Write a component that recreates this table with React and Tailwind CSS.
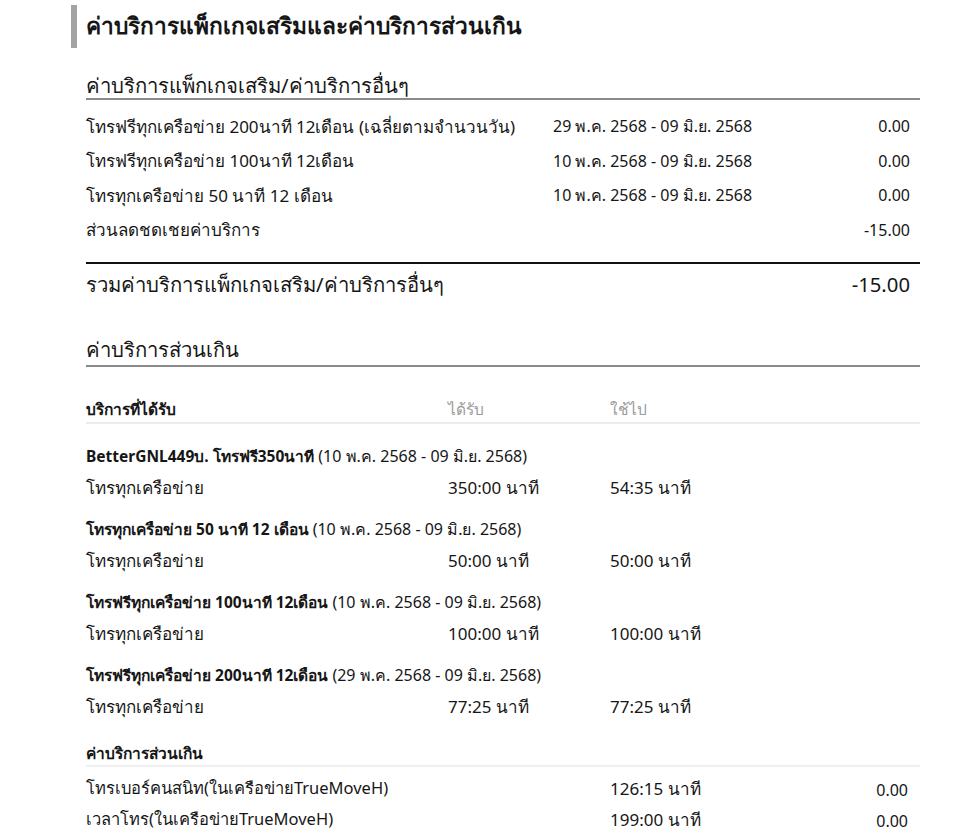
// App.jsx
// Add-on package and overage charges statement

const addons = [
    { name: 'โทรฟรีทุกเครือข่าย 200นาที 12เดือน (เฉลี่ยตามจำนวนวัน)', period: '29 พ.ค. 2568 - 09 มิ.ย. 2568', amount: '0.00' },
    { name: 'โทรฟรีทุกเครือข่าย 100นาที 12เดือน', period: '10 พ.ค. 2568 - 09 มิ.ย. 2568', amount: '0.00' },
    { name: 'โทรทุกเครือข่าย 50 นาที 12 เดือน', period: '10 พ.ค. 2568 - 09 มิ.ย. 2568', amount: '0.00' },
    { name: 'ส่วนลดชดเชยค่าบริการ', period: '', amount: '-15.00' },
];

const packages = [
    { title: 'BetterGNL449บ. โทรฟรี350นาที', period: '(10 พ.ค. 2568 - 09 มิ.ย. 2568)', received: '350:00 นาที', used: '54:35 นาที' },
    { title: 'โทรทุกเครือข่าย 50 นาที 12 เดือน', period: '(10 พ.ค. 2568 - 09 มิ.ย. 2568)', received: '50:00 นาที', used: '50:00 นาที' },
    { title: 'โทรฟรีทุกเครือข่าย 100นาที 12เดือน', period: '(10 พ.ค. 2568 - 09 มิ.ย. 2568)', received: '100:00 นาที', used: '100:00 นาที' },
    { title: 'โทรฟรีทุกเครือข่าย 200นาที 12เดือน', period: '(29 พ.ค. 2568 - 09 มิ.ย. 2568)', received: '77:25 นาที', used: '77:25 นาที' },
];

const overages = [
    { name: 'โทรเบอร์คนสนิท(ในเครือข่ายTrueMoveH)', used: '126:15 นาที', amount: '0.00' },
    { name: 'เวลาโทร(ในเครือข่ายTrueMoveH)', used: '199:00 นาที', amount: '0.00' },
];

export default function App() {
    return (
        <div className="min-h-[834px] bg-white text-[#161616] font-['Noto_Sans','DejaVu_Sans',sans-serif] pt-[5px] pl-[71px] pr-[40px]">

            {/* Page heading */}
            <div className="flex items-center gap-[9px] h-[43px]">
                <div className="w-[6px] h-[43px] bg-[#a3a3a3]" />
                <h1 className="text-[22.7px] font-bold leading-none">ค่าบริการแพ็กเกจเสริมและค่าบริการส่วนเกิน</h1>
            </div>

            <div className="pl-[15px]">

                {/* Add-on packages */}
                <h2 className="mt-[24px] h-[26px] leading-[26px] text-[20.3px]">ค่าบริการแพ็กเกจเสริม/ค่าบริการอื่นๆ</h2>
                <div className="h-[2px] bg-[#8a8a8a]" />

                <div className="mt-[9px]">
                    {addons.map((row, i) => (
                        <div key={i} className="flex items-center h-[34.5px] text-[16px] pr-[10px]">
                            <span className="w-[467px] truncate text-[17px]">{row.name}</span>
                            <span className="flex-1">{row.period}</span>
                            <span>{row.amount}</span>
                        </div>
                    ))}
                </div>

                <div className="mt-[15px] h-[2px] bg-[#111]" />
                <div className="flex items-center justify-between h-[40px] text-[20.3px] pr-[10px]">
                    <span>รวมค่าบริการแพ็กเกจเสริม/ค่าบริการอื่นๆ</span>
                    <span>-15.00</span>
                </div>

                {/* Overage charges */}
                <h2 className="mt-[32px] h-[26px] leading-[26px] text-[20.3px]">ค่าบริการส่วนเกิน</h2>
                <div className="mt-[3px] h-[2px] bg-[#8a8a8a]" />

                <div className="mt-[31px] flex items-center h-[24px] text-[15.5px]">
                    <span className="w-[362px] font-bold">บริการที่ได้รับ</span>
                    <span className="w-[162px] text-[#9a9a9a]">ได้รับ</span>
                    <span className="text-[#9a9a9a]">ใช้ไป</span>
                </div>
                <div className="h-[2px] bg-[#ececec]" />

                <div className="mt-[20px]">
                    {packages.map((p, i) => (
                        <div key={i} className="mt-[9px] first:mt-0">
                            <div className="h-[24px] leading-[24px] text-[15.5px]">
                                <span className="font-bold">{p.title}</span> <span className="text-[16px]">{p.period}</span>
                            </div>
                            <div className="flex items-center h-[40px] text-[17px]">
                                <span className="w-[362px]">โทรทุกเครือข่าย</span>
                                <span className="w-[162px]">{p.received}</span>
                                <span>{p.used}</span>
                            </div>
                        </div>
                    ))}
                </div>

                <div className="mt-[14px] h-[24px] leading-[24px] text-[15.5px] font-bold">ค่าบริการส่วนเกิน</div>
                <div className="h-[2px] bg-[#f0f0f0]" />
                <div className="mt-[6px]">
                    {overages.map((row, i) => (
                        <div key={i} className="flex items-center h-[31px] pr-[12px]">
                            <span className="w-[524px] text-[16.5px]">{row.name}</span>
                            <span className="flex-1 text-[17px]">{row.used}</span>
                            <span className="pt-[3px] text-[16px]">{row.amount}</span>
                        </div>
                    ))}
                </div>
            </div>
        </div>
    );
}
